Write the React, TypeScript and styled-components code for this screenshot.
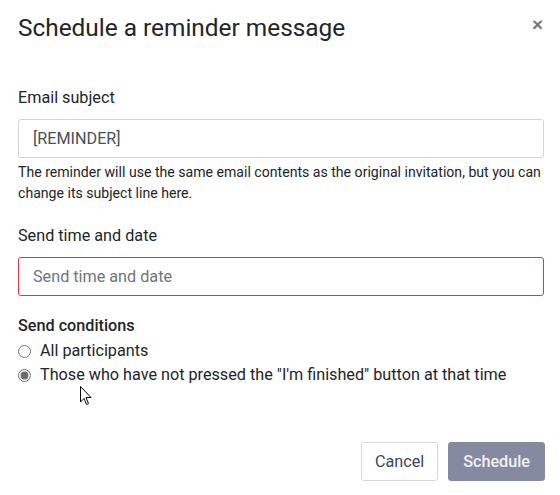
import React from 'react'
import styled, { createGlobalStyle } from 'styled-components'

const GlobalStyle = createGlobalStyle`
  body {
    margin: 0;
    background: #fff;
    font-family: Roboto, 'Liberation Sans', sans-serif;
    color: #212529;
  }
`

const Dialog = styled.div`
  position: relative;
  width: 560px;
  height: 495px;
  box-sizing: border-box;
  padding: 0 16px 0 18px;
  display: flex;
  flex-direction: column;
`

const Header = styled.div`
  display: flex;
  align-items: center;
  justify-content: space-between;
  height: 54px;
`

const Title = styled.h3`
  margin: 0;
  font-size: 24.4px;
  font-weight: 400;
  color: #212529;
`

const CloseButton = styled.button`
  border: 0;
  background: none;
  padding: 0;
  margin: -5px 1px 0 0;
  font-size: 19px;
  font-weight: 700;
  line-height: 1;
  color: #777;
  font-family: 'Liberation Sans', sans-serif;
`

const Body = styled.div`
  padding-top: 32px;
  display: flex;
  flex-direction: column;
`

const Field = styled.div`
  display: flex;
  flex-direction: column;
  margin-bottom: 18px;
`

const Label = styled.label<{ bold?: boolean }>`
  font-size: 16.2px;
  line-height: 24px;
  font-weight: ${(p) => (p.bold ? 500 : 400)};
  margin-bottom: ${(p) => (p.bold ? '1px' : '9px')};
  color: #212529;
`

const Input = styled.input<{ invalid?: boolean }>`
  height: 39px;
  box-sizing: border-box;
  padding: 0 14px;
  border: 1px solid ${(p) => (p.invalid ? '#dc3545' : '#ced4da')};
  border-radius: 3px;
  font-family: Roboto, sans-serif;
  font-size: 16.2px;
  color: #495057;
  outline: none;
  &::placeholder {
    color: #6c757d;
  }
`

const Help = styled.small`
  display: block;
  font-size: 14.1px;
  line-height: 21px;
  margin-top: 4px;
  padding-bottom: 2px;
  color: #212529;
`

const RadioRow = styled.label`
  display: flex;
  align-items: center;
  gap: 9px;
  font-size: 16.2px;
  line-height: 24px;
  color: #212529;
  input {
    margin: 0;
    width: 13px;
    height: 13px;
    accent-color: #6c6c6c;
  }
`

const Footer = styled.div`
  display: flex;
  justify-content: flex-end;
  gap: 10px;
  margin-top: auto;
  margin-right: -1px;
  padding-bottom: 14px;
`

const Button = styled.button<{ primary?: boolean }>`
  height: 39px;
  padding: 0 ${(p) => (p.primary ? '14px' : '13px')};
  border-radius: 3px;
  font-family: Roboto, sans-serif;
  font-size: 16.2px;
  border: 1px solid ${(p) => (p.primary ? '#858aa0' : '#d5d7de')};
  background: ${(p) => (p.primary ? '#858aa0' : '#fff')};
  color: ${(p) => (p.primary ? '#f1f2f5' : '#3d4466')};
  font-weight: ${(p) => (p.primary ? 500 : 400)};
`

const Cursor = styled.svg`
  position: absolute;
  left: 80px;
  top: 386px;
`

export default function App() {
  return (
    <>
      <GlobalStyle />
      <Dialog>
        <Header>
          <Title>Schedule a reminder message</Title>
          <CloseButton aria-label="close">×</CloseButton>
        </Header>
        <Body>
          <Field>
            <Label>Email subject</Label>
            <Input defaultValue="[REMINDER]" />
            <Help>
              The reminder will use the same email contents as the original invitation, but you can
              change its subject line here.
            </Help>
          </Field>
          <Field>
            <Label>Send time and date</Label>
            <Input invalid placeholder="Send time and date" />
          </Field>
          <div>
            <Label bold as="div">Send conditions</Label>
            <RadioRow>
              <input type="radio" name="cond" />
              All participants
            </RadioRow>
            <RadioRow>
              <input type="radio" name="cond" defaultChecked />
              Those who have not pressed the "I'm finished" button at that time
            </RadioRow>
          </div>
        </Body>
        <Footer>
          <Button>Cancel</Button>
          <Button primary>Schedule</Button>
        </Footer>
        <Cursor width="12" height="20" viewBox="0 0 12 20">
          <path d="M0.5 0.5 L0.5 16 L4 12.5 L6.5 18.5 L8.5 17.5 L6 11.5 L11 11.5 Z" fill="#fff" stroke="#000" strokeWidth="1" />
        </Cursor>
      </Dialog>
    </>
  )
}
